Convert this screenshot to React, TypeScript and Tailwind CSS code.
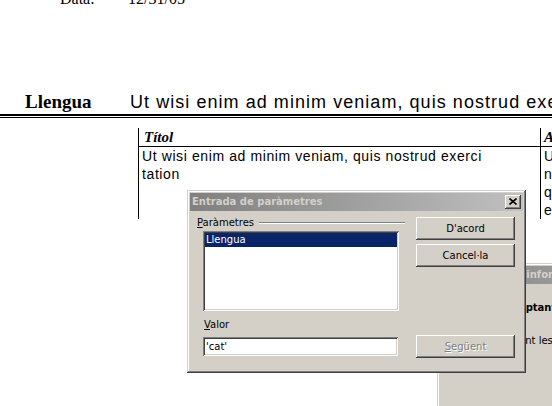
const raised =
  'shadow-[inset_-1px_-1px_#404040,inset_1px_1px_#d4d0c8,inset_-2px_-2px_#808080,inset_2px_2px_#ffffff]'

function Button({ label, disabled, accel }: { label: string; disabled?: boolean; accel?: boolean }) {
  const first = label.slice(0, 1)
  const rest = label.slice(1)
  return (
    <div
      className={`h-[23px] w-[99px] bg-[#d4d0c8] flex items-center justify-center shadow-[inset_-1px_-1px_#404040,inset_1px_1px_#ffffff,inset_-2px_-2px_#808080,inset_2px_2px_#d4d0c8] ${
        disabled ? 'text-[#808080] [text-shadow:1px_1px_0_#ffffff]' : 'text-black'
      }`}
    >
      {accel ? (
        <span>
          <span className="underline underline-offset-1">{first}</span>
          {rest}
        </span>
      ) : (
        <span>{label}</span>
      )}
    </div>
  )
}

export default function App() {
  return (
    <div className="relative w-[552px] h-[406px] overflow-hidden bg-white text-black">
      {/* Document */}
      <div className="flex -mt-[11px] font-['Liberation_Serif',serif] text-[16px] leading-[20px]">
        <span className="ml-[60px] w-[68px]">Data:</span>
        <span>12/31/05</span>
      </div>

      <div className="mt-[82px] flex items-baseline whitespace-nowrap leading-[22px]">
        <span className="ml-[25px] w-[105px] shrink-0 font-['Liberation_Serif',serif] text-[19px] font-bold">Llengua</span>
        <span className="font-['Liberation_Sans',sans-serif] text-[18px] tracking-[1.05px]">
          Ut wisi enim ad minim veniam, quis nostrud exerci tation
        </span>
      </div>

      <div className="mt-[1px] h-[4px] border-t-2 border-b border-black" />

      <div className="mt-[10px] ml-[138px] flex w-[500px] font-['Liberation_Sans',sans-serif] text-[14px] leading-[18px] tracking-[0.6px]">
        <div className="w-[402px] shrink-0 border-l border-black">
          <div className="h-[19px] border-b border-black pl-[5px] font-['Liberation_Serif',serif] text-[15px] font-bold italic tracking-normal">
            Títol
          </div>
          <div className="h-[72px] pl-[3px] pr-[20px]">Ut wisi enim ad minim veniam, quis nostrud exerci tation</div>
        </div>
        <div className="flex-1 border-l border-black whitespace-nowrap">
          <div className="h-[19px] border-b border-black pl-[3px] font-['Liberation_Serif',serif] text-[15px] font-bold italic tracking-normal">
            Autor
          </div>
          <div className="h-[72px] pl-[3px]">
            <div>Ut wisi enim</div>
            <div>nostrud ad</div>
            <div>quis nostrud</div>
            <div>exerci tation</div>
          </div>
        </div>
      </div>

      {/* Background window */}
      <div
        className={`absolute left-[437px] top-[263px] w-[300px] h-[170px] bg-[#d4d0c8] p-[3px] ${raised} font-['DejaVu_Sans',sans-serif] text-[10px] leading-[12px]`}
      >
        <div className="h-[18px] bg-gradient-to-r from-[#808080] to-[#c0c0c0] flex items-center pl-[16px] font-bold text-[#d4d0c8] whitespace-nowrap">
          Sol·licitud d'informació
        </div>
        <div className="pt-[18px] whitespace-nowrap">
          <div className="ml-[61px] font-bold">Comptant els paràmetres</div>
          <div className="mt-[21px] ml-[43px]">Mitjançant les dades</div>
        </div>
      </div>

      {/* Dialog */}
      <div
        className={`absolute left-[187px] top-[190px] w-[339px] h-[183px] bg-[#d4d0c8] p-[3px] ${raised} flex flex-col font-['DejaVu_Sans',sans-serif] text-[10px] leading-[12px] text-black`}
      >
        <div className="h-[18px] shrink-0 bg-gradient-to-r from-[#808080] to-[#c0c0c0] flex items-center justify-between pl-[2px] pr-[2px]">
          <span className="font-bold text-[#d4d0c8]">Entrada de paràmetres</span>
          <div className="h-[14px] w-[16px] bg-[#d4d0c8] flex items-center justify-center shadow-[inset_-1px_-1px_#404040,inset_1px_1px_#ffffff,inset_-2px_-2px_#808080,inset_2px_2px_#d4d0c8]">
            <svg width="8" height="7" viewBox="0 0 8 7" className="mt-[-1px]">
              <path d="M0.5 0.5 L7.5 6.5 M7.5 0.5 L0.5 6.5" stroke="black" strokeWidth="1.6" />
            </svg>
          </div>
        </div>

        <div className="flex pl-[7px] pt-[6px]">
          <div className="w-[208px]">
            <div className="flex items-center h-[12px]">
              <span>
                <span className="underline underline-offset-1">P</span>aràmetres
              </span>
              <div className="ml-[5px] flex-1 h-[2px] border-t border-[#808080] border-b border-b-white" />
            </div>
            <div className="mt-[2px] ml-[6px] w-[196px] h-[80px] bg-white p-[2px] shadow-[inset_1px_1px_#808080,inset_-1px_-1px_#ffffff,inset_2px_2px_#404040,inset_-2px_-2px_#d4d0c8]">
              <div className="h-[14px] bg-[#0a246a] text-white pl-[1px] flex items-center">Llengua</div>
            </div>
            <div className="mt-[8px] ml-[7px]">
              <span className="underline underline-offset-1">V</span>alor
            </div>
            <div className="mt-[6px] ml-[6px] w-[195px] h-[19px] bg-white pl-[3px] flex items-center shadow-[inset_1px_1px_#808080,inset_-1px_-1px_#ffffff,inset_2px_2px_#404040,inset_-2px_-2px_#d4d0c8]">
              'cat'
            </div>
          </div>

          <div className="ml-[11px] flex flex-col">
            <Button label="D'acord" />
            <div className="mt-[4px]">
              <Button label="Cancel·la" />
            </div>
            <div className="mt-[68px]">
              <Button label="Següent" disabled accel />
            </div>
          </div>
        </div>
      </div>
    </div>
  )
}
